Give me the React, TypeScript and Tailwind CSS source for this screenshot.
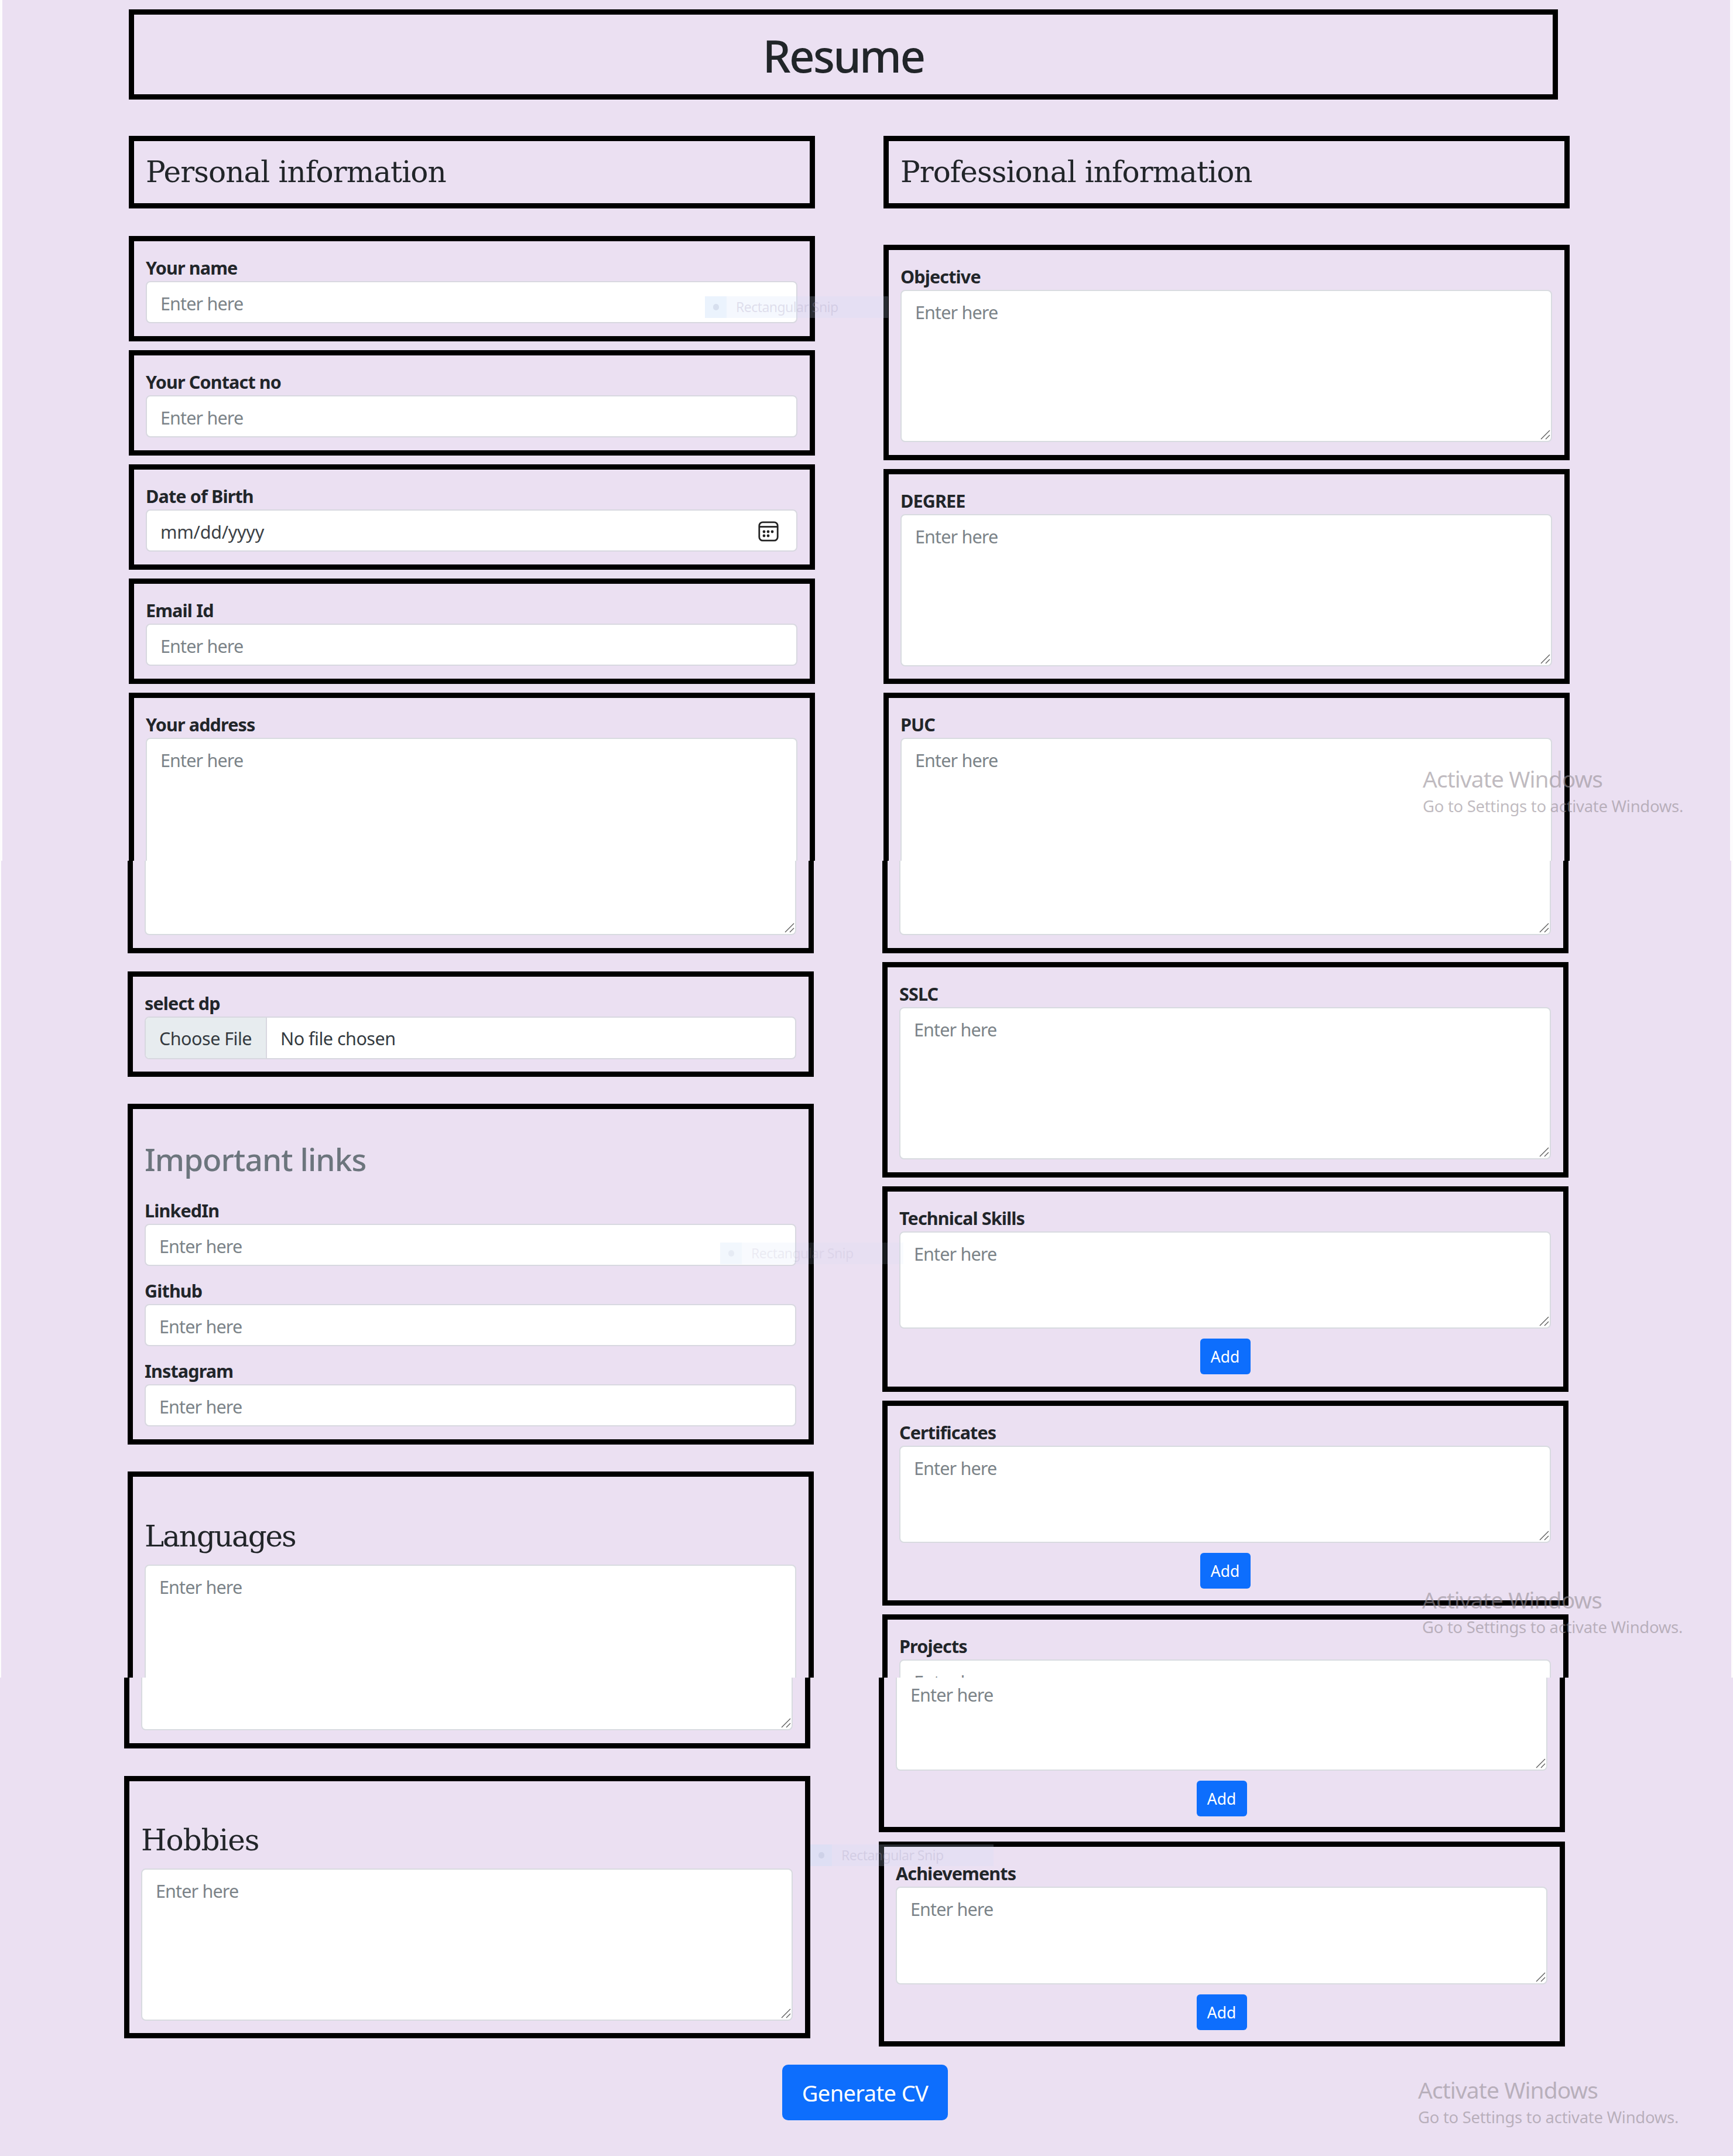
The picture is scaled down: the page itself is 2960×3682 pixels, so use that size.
import React from 'react';

const SANS = "font-['Noto_Sans',sans-serif]";
const SERIF = "font-['DejaVu_Serif',serif]";

function Card({ className = '', children }: { className?: string; children?: React.ReactNode }) {
  return (
    <div className={`flex w-full flex-none flex-col border-[9px] border-black pl-[20px] pr-[21px] ${className}`}>
      {children}
    </div>
  );
}

function Label({ children }: { children: React.ReactNode }) {
  return (
    <div className="h-[47px] flex-none whitespace-nowrap pt-px text-[30.5px] font-bold leading-[47px] tracking-[-0.85px] text-[#212529]">
      {children}
    </div>
  );
}

function Input() {
  return (
    <div className="h-[72px] flex-none rounded-[8px] border-2 border-[#d8d8e0] bg-white pl-[23px] pt-[12px] text-[30.5px] leading-[48px] tracking-[-0.85px] text-[#7b8388]">
      Enter here
    </div>
  );
}

function Grip() {
  return (
    <svg className="absolute bottom-[2px] right-[1px] h-[17px] w-[17px]" viewBox="0 0 17 17" fill="none" stroke="#5c5c5c" strokeWidth="1.4">
      <path d="M1 16 16 1M9 16l7-7" />
    </svg>
  );
}

function Area({ className }: { className: string }) {
  return (
    <div className={`relative flex-none rounded-[8px] border-2 border-[#d8dbe0] bg-white pl-[23px] pt-[12px] text-[30.5px] leading-[48px] tracking-[-0.85px] text-[#7b8388] ${className}`}>
      Enter here
      <Grip />
    </div>
  );
}

/* Lower part of a text area whose upper part belongs to the previous sheet. */
function AreaTail({ className, text }: { className: string; text?: string }) {
  return (
    <div className={`relative flex-none rounded-b-[8px] border-2 border-t-0 border-[#d8dbe0] bg-white pl-[23px] pt-[5px] text-[30.5px] leading-[48px] tracking-[-0.85px] text-[#7b8388] ${className}`}>
      {text}
      <Grip />
    </div>
  );
}

function AddButton() {
  return (
    <button className="mt-[17px] h-[61px] w-[86px] flex-none self-center rounded-[6px] bg-[#0d6efd] pt-px text-[26.5px] leading-[60px] text-white">
      Add
    </button>
  );
}

function CalendarIcon() {
  return (
    <svg className="mr-[30px] mt-[2px] h-[35px] w-[35px]" viewBox="0 0 35 35" fill="none" stroke="#222" strokeWidth="2.8">
      <rect x="1.8" y="1.8" width="31.4" height="31.4" rx="6" />
      <path d="M2 9.6h31" />
      <g fill="#222" stroke="none">
        <circle cx="10" cy="18" r="2.4" />
        <circle cx="17" cy="18" r="2.4" />
        <circle cx="24" cy="18" r="2.4" />
        <circle cx="10" cy="25" r="2.4" />
        <circle cx="17" cy="25" r="2.4" />
      </g>
    </svg>
  );
}

function Watermark({ className }: { className: string }) {
  return (
    <div className={`absolute whitespace-nowrap text-[#968e96]/60 ${className}`}>
      <div className="h-[48px] text-[39px] leading-[48px] tracking-[-0.95px]">Activate Windows</div>
      <div className="h-[46px] text-[27.5px] leading-[46px] tracking-[-0.3px]">Go to Settings to activate Windows.</div>
    </div>
  );
}

function SnipGhost({ className }: { className: string }) {
  return (
    <div className={`absolute flex h-[37px] w-[313px] items-center bg-[#cfdcf8]/20 ${className}`}>
      <div className="flex h-full w-[37px] items-center justify-center bg-[#c4e2fa]/20">
        <div className="h-[11px] w-[10px] rounded-full bg-[#a9b4cc]/30" />
      </div>
      <div className="ml-[16px] whitespace-nowrap text-[23px] leading-[37px] tracking-[-0.55px] text-[#a79fc0]/30">Rectangular Snip</div>
    </div>
  );
}

export default function App() {
  return (
    <div className={`h-[3682px] w-[2960px] overflow-hidden bg-[#fdfcfd] ${SANS}`}>
      <section className="relative h-[1470px] overflow-hidden pl-[4px] pr-[5px]">
        <div className="h-full bg-[#ebe0f2] pl-[216px] pt-[16px]">
          <div className="flex h-[154px] w-[2441px] items-center justify-center border-[9px] border-black">
            <h1 className="pt-[3px] text-[76px] font-medium leading-none tracking-[-2.7px] text-[#212529]">Resume</h1>
          </div>
          <div className="mt-[62px] flex gap-[117px]">
            <div className="flex w-[1172px] flex-none flex-col gap-[15px]">
              <Card className="mb-[32px] h-[124px] justify-center">
                <h2 className={`whitespace-nowrap text-[50px] leading-[60px] tracking-[-0.9px] text-[#212529] ${SERIF}`}>Personal information</h2>
              </Card>
              <Card className="h-[180px] pt-[21px]">
                <Label>Your name</Label>
                <Input />
              </Card>
              <Card className="h-[180px] pt-[21px]">
                <Label>Your Contact no</Label>
                <Input />
              </Card>
              <Card className="h-[180px] pt-[21px]">
                <Label>Date of Birth</Label>
                <div className="flex h-[72px] flex-none items-center justify-between rounded-[8px] border-2 border-[#d8d8e0] bg-white pl-[23px]">
                  <span className="pt-[3px] text-[30.5px] leading-[48px] tracking-[-0.25px] text-[#3c4146]">mm/dd/yyyy</span>
                  <CalendarIcon />
                </div>
              </Card>
              <Card className="h-[180px] pt-[21px]">
                <Label>Email Id</Label>
                <Input />
              </Card>
              <Card className="h-[444px] pt-[21px]">
                <Label>Your address</Label>
                <Area className="h-[336px]" />
              </Card>
            </div>
            <div className="flex w-[1172px] flex-none flex-col gap-[15px]">
              <Card className="mb-[47px] h-[124px] justify-center">
                <h2 className={`whitespace-nowrap text-[50px] leading-[60px] tracking-[-0.95px] text-[#212529] ${SERIF}`}>Professional information</h2>
              </Card>
              <Card className="h-[368px] pt-[21px]">
                <Label>Objective</Label>
                <Area className="h-[260px]" />
              </Card>
              <Card className="h-[367px] pt-[21px]">
                <Label>DEGREE</Label>
                <Area className="h-[260px]" />
              </Card>
              <Card className="h-[444px] pt-[21px]">
                <Label>PUC</Label>
                <Area className="h-[336px]" />
              </Card>
            </div>
          </div>
        </div>
        <SnipGhost className="left-[1204px] top-[506px]" />
        <Watermark className="left-[2430px] top-[1306px]" />
      </section>

      <section className="relative h-[1395px] overflow-hidden pl-[2px] pr-[3px]">
        <div className="h-full bg-[#ebe0f2] pl-[216px]">
          <div className="flex gap-[117px]">
            <div className="flex w-[1172px] flex-none flex-col">
              <Card className="h-[158px] border-t-0">
                <AreaTail className="h-[127px]" />
              </Card>
              <Card className="mt-[31px] h-[180px] pt-[21px]">
                <Label>select dp</Label>
                <div className="flex h-[73px] flex-none items-center overflow-hidden rounded-[8px] border-2 border-[#d8d8e0] bg-white text-[30.5px]">
                  <div className="flex h-full w-[207px] items-center border-r-2 border-[#d8d8e0] bg-[#e7ecef] pl-[23px] pt-[3px] tracking-[-0.5px] text-[#343a3f]">Choose File</div>
                  <div className="pl-[23px] pt-[3px] tracking-[-0.5px] text-[#343a3f]">No file chosen</div>
                </div>
              </Card>
              <Card className="mt-[46px] h-[582px] pt-[56px]">
                <h3 className="h-[60px] flex-none whitespace-nowrap text-[53px] font-medium leading-[60px] tracking-[-0.9px] text-[#6c757d]">Important links</h3>
                <div className="mt-[33px] flex flex-col gap-[18px]">
                  <div>
                    <Label>LinkedIn</Label>
                    <Input />
                  </div>
                  <div>
                    <Label>Github</Label>
                    <Input />
                  </div>
                  <div>
                    <Label>Instagram</Label>
                    <Input />
                  </div>
                </div>
              </Card>
              <Card className="mt-[46px] h-[472px] pt-[72px]">
                <h3 className={`h-[60px] flex-none text-[50px] leading-[60px] tracking-[-2.1px] text-[#212529] ${SERIF}`}>Languages</h3>
                <Area className="mt-[18px] h-[290px]" />
              </Card>
            </div>
            <div className="flex w-[1172px] flex-none flex-col">
              <Card className="h-[158px] border-t-0">
                <AreaTail className="h-[127px]" />
              </Card>
              <Card className="mt-[15px] h-[368px] pt-[21px]">
                <Label>SSLC</Label>
                <Area className="h-[260px]" />
              </Card>
              <Card className="mt-[15px] h-[351px] pt-[21px]">
                <Label>Technical Skills</Label>
                <Area className="h-[166px]" />
                <AddButton />
              </Card>
              <Card className="mt-[15px] h-[350px] pt-[21px]">
                <Label>Certificates</Label>
                <Area className="h-[166px]" />
                <AddButton />
              </Card>
              <Card className="mt-[15px] h-[350px] pt-[21px]">
                <Label>Projects</Label>
                <Area className="h-[166px]" />
              </Card>
            </div>
          </div>
        </div>
        <SnipGhost className="left-[1230px] top-[652px] opacity-60" />
        <Watermark className="left-[2429px] top-[1238px]" />
      </section>

      <section className="relative h-[817px] overflow-hidden bg-[#ebe0f2] pl-[212px]">
        <div className="flex h-[630px] gap-[117px]">
          <div className="flex w-[1172px] flex-none flex-col">
            <Card className="h-[121px] border-t-0">
              <AreaTail className="h-[90px]" />
            </Card>
            <Card className="mt-[47px] h-[448px] pt-[71px]">
              <h3 className={`h-[60px] flex-none text-[50px] leading-[60px] tracking-[-1.1px] text-[#212529] ${SERIF}`}>Hobbies</h3>
              <Area className="mt-[18px] h-[260px]" />
            </Card>
          </div>
          <div className="flex w-[1172px] flex-none flex-col">
            <Card className="h-[264px] border-t-0">
              <AreaTail className="h-[159px]" text="Enter here" />
              <AddButton />
            </Card>
            <Card className="mt-[16px] h-[350px] pt-[21px]">
              <Label>Achievements</Label>
              <Area className="h-[167px]" />
              <AddButton />
            </Card>
          </div>
        </div>
        <button className="ml-[1124px] mt-[31px] h-[95px] w-[283px] whitespace-nowrap rounded-[10px] bg-[#0d6efd] pt-px text-[38px] leading-[94px] tracking-[-0.6px] text-white">
          Generate CV
        </button>
        <SnipGhost className="left-[1384px] top-[285px]" />
        <Watermark className="left-[2422px] top-[680px]" />
      </section>
    </div>
  );
}
